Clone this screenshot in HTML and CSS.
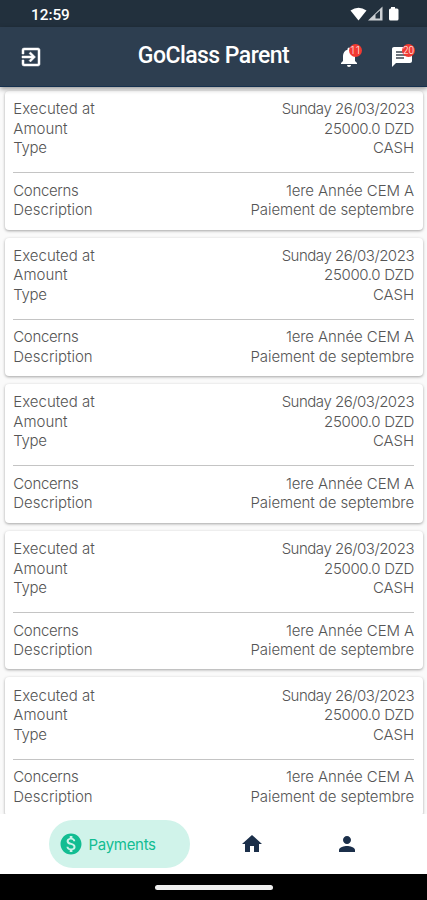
FILE: index.html
```html
<!DOCTYPE html>
<html lang="en">
<head>
    <meta charset="UTF-8">
    <title>GoClass Parent</title>
    <link rel="stylesheet" href="styles.css">
</head>
<body>
    <div class="status-bar">
        <span class="clock">12:59</span>
        <svg class="status-icons" viewBox="0 0 50 18">
            <path fill="#fff" d="M0.5 4.5Q8.5-1 16.5 4.5L8.5 14.5Z"/>
            <path fill="#ccd0d4" d="M18 14.5L32.5 0.5V14.5Z"/>
            <path fill="#22303d" d="M25.5 8.5L30 4.5V12.5H25.5Z"/>
            <path fill="#fff" d="M41 1h4v1.500h2q1.500 0 1.500 1.500v9q0 1.500-1.500 1.500h-6.500q-1.500 0-1.500-1.500v-9q0-1.500 1.500-1.500h.5z"/>
        </svg>
    </div>
    <header class="header">
        <button class="icon-btn exit-btn" title="Logout">
            <svg viewBox="0 0 24 24"><path d="M10.090 15.590L11.500 17l5-5-5-5-1.410 1.410L12.670 11H3v2h9.670l-2.580 2.590zM19 3H5a2 2 0 0 0-2 2v4h2V5h14v14H5v-4H3v4a2 2 0 0 0 2 2h14c1.100 0 2-.9 2-2V5c0-1.100-.9-2-2-2z"/></svg>
        </button>
        <h1>GoClass Parent</h1>
        <div class="header-buttons">
            <button class="icon-btn" title="Notifications">
                <svg viewBox="0 0 24 24"><path d="M12 22c1.100 0 2-.9 2-2h-4a2 2 0 0 0 2 2zm6-6v-5c0-3.070-1.640-5.640-4.500-6.320V4a1.500 1.500 0 0 0-3 0v.68C7.630 5.360 6 7.920 6 11v5l-2 2v1h16v-1l-2-2z"/></svg>
                <span class="badge">11</span>
            </button>
            <button class="icon-btn" title="Messages">
                <svg viewBox="0 0 24 24"><path d="M20 2H4c-1.100 0-1.990.9-1.990 2L2 22l4-4h14c1.100 0 2-.9 2-2V4c0-1.100-.9-2-2-2z"/><path class="lines" d="M6 6h12v2H6zM6 9h12v2H6zM6 12h8v2H6z"/></svg>
                <span class="badge">20</span>
            </button>
        </div>
    </header>
    <main class="payment-list">
        <div class="card">
            <div class="row"><span>Executed at</span><span class="date">Sunday 26/03/2023</span></div>
            <div class="row"><span>Amount</span><span class="amount">25000.0 DZD</span></div>
            <div class="row"><span class="tight">Type</span><span class="value">CASH</span></div>
            <hr>
            <div class="row"><span class="tight">Concerns</span><span class="value">1ere Année CEM A</span></div>
            <div class="row"><span>Description</span><span class="value">Paiement de septembre</span></div>
        </div>
        <div class="card">
            <div class="row"><span>Executed at</span><span class="date">Sunday 26/03/2023</span></div>
            <div class="row"><span>Amount</span><span class="amount">25000.0 DZD</span></div>
            <div class="row"><span class="tight">Type</span><span class="value">CASH</span></div>
            <hr>
            <div class="row"><span class="tight">Concerns</span><span class="value">1ere Année CEM A</span></div>
            <div class="row"><span>Description</span><span class="value">Paiement de septembre</span></div>
        </div>
        <div class="card">
            <div class="row"><span>Executed at</span><span class="date">Sunday 26/03/2023</span></div>
            <div class="row"><span>Amount</span><span class="amount">25000.0 DZD</span></div>
            <div class="row"><span class="tight">Type</span><span class="value">CASH</span></div>
            <hr>
            <div class="row"><span class="tight">Concerns</span><span class="value">1ere Année CEM A</span></div>
            <div class="row"><span>Description</span><span class="value">Paiement de septembre</span></div>
        </div>
        <div class="card">
            <div class="row"><span>Executed at</span><span class="date">Sunday 26/03/2023</span></div>
            <div class="row"><span>Amount</span><span class="amount">25000.0 DZD</span></div>
            <div class="row"><span class="tight">Type</span><span class="value">CASH</span></div>
            <hr>
            <div class="row"><span class="tight">Concerns</span><span class="value">1ere Année CEM A</span></div>
            <div class="row"><span>Description</span><span class="value">Paiement de septembre</span></div>
        </div>
        <div class="card">
            <div class="row"><span>Executed at</span><span class="date">Sunday 26/03/2023</span></div>
            <div class="row"><span>Amount</span><span class="amount">25000.0 DZD</span></div>
            <div class="row"><span class="tight">Type</span><span class="value">CASH</span></div>
            <hr>
            <div class="row"><span class="tight">Concerns</span><span class="value">1ere Année CEM A</span></div>
            <div class="row"><span>Description</span><span class="value">Paiement de septembre</span></div>
        </div>
    </main>
    <nav class="bottom-nav">
        <a class="nav-item active">
            <svg viewBox="0 0 24 24"><path d="M12 1.500C6.200 1.500 1.500 6.200 1.500 12s4.700 10.500 10.500 10.500 10.500-4.700 10.500-10.500S17.800 1.500 12 1.500zm1.410 16.590V20h-2.670v-1.930c-1.710-.36-3.160-1.460-3.270-3.400h1.960c.1 1.050.82 1.870 2.650 1.870 1.960 0 2.400-.98 2.400-1.590 0-.83-.44-1.610-2.670-2.140-2.480-.6-4.180-1.620-4.180-3.670 0-1.720 1.390-2.840 3.110-3.210V4h2.670v1.950c1.860.45 2.790 1.860 2.850 3.390H14.300c-.05-1.110-.64-1.870-2.220-1.870-1.500 0-2.400.68-2.400 1.640 0 .84.65 1.390 2.670 1.910s4.180 1.390 4.180 3.910c-.01 1.830-1.380 2.830-3.120 3.160z"/></svg>
            <span>Payments</span>
        </a>
        <a class="nav-item">
            <svg viewBox="0 0 24 24"><path d="M10 20v-6h4v6h5v-8h3L12 3 2 12h3v8z"/></svg>
        </a>
        <a class="nav-item">
            <svg viewBox="0 0 24 24"><path d="M12 12c2.210 0 4-1.790 4-4s-1.790-4-4-4-4 1.790-4 4 1.790 4 4 4zm0 2c-2.670 0-8 1.340-8 4v2h16v-2c0-2.660-5.330-4-8-4z"/></svg>
        </a>
    </nav>
    <div class="system-bar">
        <div class="home-handle"></div>
    </div>
</body>
</html>
```

FILE: styles.css
```css
* {
    box-sizing: border-box;
}
body {
    margin: 0;
    height: 900px;
    display: flex;
    flex-direction: column;
    overflow: hidden;
    background: #fafafa;
    font-family: Inter, Roboto, sans-serif;
}
.status-bar {
    height: 27px;
    flex-shrink: 0;
    display: flex;
    align-items: center;
    justify-content: space-between;
    padding: 2px 27.500px 0 31px;
    background: #22303d;
    color: #fff;
}
.clock {
    font: 500 15.300px/20px Roboto, sans-serif;
}
.status-icons {
    width: 50px;
    height: 18px;
}
.header {
    height: 60px;
    flex-shrink: 0;
    display: grid;
    grid-template-columns: 90px 1fr 90px;
    align-items: center;
    background: #2d3e50;
    border-bottom: 1px solid #15304e;
    box-shadow: 0 2px 5px rgba(0, 0, 0, 0.4);
    z-index: 1;
}
.header h1 {
    margin: 0 0 2px;
    color: #fff;
    font: 500 23px/28px Roboto, sans-serif;
    letter-spacing: -0.550px;
    text-align: center;
    white-space: nowrap;
}
.header-buttons {
    display: flex;
    gap: 29px;
}
.icon-btn {
    position: relative;
    width: 24px;
    height: 24px;
    padding: 0;
    border: none;
    background: none;
}
.icon-btn svg {
    display: block;
    width: 24px;
    height: 24px;
    fill: #fff;
}
.icon-btn .lines {
    fill: #6d747c;
}
.exit-btn {
    margin-left: 19px;
}
.exit-btn svg {
    stroke: #fff;
    stroke-width: 0.500;
}
.badge {
    position: absolute;
    top: -1px;
    right: -1px;
    width: 13px;
    height: 13px;
    border-radius: 50%;
    background: #f23a32;
    color: #fff;
    font: 300 10px/13px Roboto, sans-serif;
    text-align: center;
}
.payment-list {
    flex: 1;
    min-height: 0;
    overflow: hidden;
    display: flex;
    flex-direction: column;
    gap: 8px;
    padding: 4px 4px 0 5px;
}
.card {
    height: 138.600px;
    flex-shrink: 0;
    padding: 8.300px 9px 0 8.300px;
    border-radius: 4px;
    background: #fff;
    box-shadow: 0 1px 3px rgba(0, 0, 0, 0.35);
}
.row {
    display: flex;
    justify-content: space-between;
    color: #555;
    font-size: 15px;
    font-weight: 300;
    line-height: 19.500px;
}
.tight {
    letter-spacing: -0.350px;
}
.value {
    letter-spacing: -0.100px;
}
.date {
    letter-spacing: -0.480px;
}
.amount {
    letter-spacing: -0.350px;
}
.card hr {
    height: 1px;
    margin: 14.500px 0 7.500px;
    border: none;
    background: #c4c4c4;
}
.bottom-nav {
    height: 60px;
    flex-shrink: 0;
    display: flex;
    align-items: center;
    padding: 0 0 0 49px;
    background: #fff;
    z-index: 1;
}
.nav-item {
    display: flex;
    align-items: center;
    justify-content: center;
    height: 48px;
    width: 95px;
    color: #1b2f4a;
}
.nav-item svg {
    width: 24px;
    height: 24px;
    fill: currentColor;
}
.nav-item.active {
    width: 141px;
    margin-right: 14px;
    justify-content: flex-start;
    gap: 6px;
    padding-left: 9.500px;
    border-radius: 24px;
    background: #d0f3ea;
    color: #12bd92;
    font-size: 15px;
    letter-spacing: -0.300px;
}
.system-bar {
    height: 26px;
    flex-shrink: 0;
    display: flex;
    justify-content: center;
    padding-top: 11px;
    background: #000;
}
.home-handle {
    width: 118px;
    height: 5px;
    border-radius: 3px;
    background: #eee;
}
```
